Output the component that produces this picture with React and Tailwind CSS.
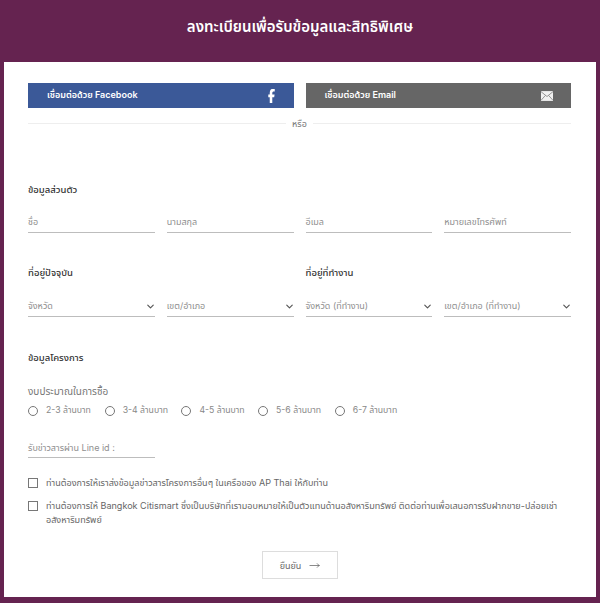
import { ChevronDown, MoveRight } from "lucide-react";

const FONT = "font-['Inter','Noto_Sans','Noto_Sans_Thai','DejaVu_Sans',sans-serif]";

function TextField({ label }) {
  return (
    <div className="h-[26px] border-b border-[#bdbdbd] flex items-center text-[9px] text-[#8f8f8f] pt-[8px] pb-[3px]">
      {label}
    </div>
  );
}

function SelectField({ label }) {
  return (
    <div className="h-[26px] border-b border-[#bdbdbd] flex items-center justify-between text-[9px] text-[#8f8f8f] pt-[8px] pb-[3px]">
      <span>{label}</span>
      <ChevronDown size={11} strokeWidth={2.5} className="text-[#555555] -mr-[1px]" />
    </div>
  );
}

function Radio({ label }) {
  return (
    <label className="w-[76.7px] flex items-center gap-[8px] text-[8.7px] text-[#888888]">
      <span className="w-[10px] h-[10px] rounded-full border border-[#777777]" />
      {label}
    </label>
  );
}

function Check({ children }) {
  return (
    <div className="flex items-start gap-[8px] text-[9.05px] leading-[14px] text-[#666666]">
      <span className="w-[10px] h-[10px] mt-[2px] shrink-0 border border-[#777777]" />
      <span>{children}</span>
    </div>
  );
}

export default function App() {
  return (
    <div className={`${FONT} bg-[#652350] h-[603px] px-[4px] pb-[6px] flex flex-col`}>
      {/* header */}
      <div className="h-[62px] flex items-center justify-center pb-[8px]">
        <h1 className="text-[15px] font-semibold text-white">ลงทะเบียนเพื่อรับข้อมูลและสิทธิพิเศษ</h1>
      </div>

      <div className="bg-white flex-1 px-[24px] pt-[21px]">
        {/* social buttons */}
        <div className="grid grid-cols-2 gap-[12px] pr-[1px]">
          <div className="h-[25px] bg-[#3b5998] flex items-center justify-between pl-[19px] pr-[19px] text-[9px] font-semibold text-white">
            <span className="-mt-[2px]">เชื่อมต่อด้วย Facebook</span>
            <svg width="7" height="14" viewBox="0 0 320 512" preserveAspectRatio="none" fill="currentColor">
              <path d="M80 299v213h116V299h87l18-100H196v-35c0-53 21-73 75-73 17 0 30 0 37 1V1C293-3 257-8 236-8 126-8 80 44 80 156v43H13v100h67z" />
            </svg>
          </div>
          <div className="h-[25px] bg-[#666666] flex items-center justify-between pl-[19px] pr-[18px] text-[9px] font-semibold text-white">
            <span className="-mt-[2px]">เชื่อมต่อด้วย Email</span>
            <svg width="12" height="10" viewBox="0 0 22 18" fill="none">
              <rect x="0" y="0" width="22" height="18" fill="#f0f0f0" />
              <path d="M0 1l11 9 11-9M0 17l8-9M22 17l-8-9" stroke="#666666" strokeWidth="1.2" />
            </svg>
          </div>
        </div>

        {/* divider */}
        <div className="flex items-center gap-[6px] mt-[9px] pr-[1px] text-[9px] text-[#777777]">
          <div className="flex-1 h-px bg-[#eeeeee]" />
          <span>หรือ</span>
          <div className="flex-1 h-px bg-[#eeeeee]" />
        </div>

        {/* personal */}
        <h2 className="mt-[52px] text-[9.5px] font-medium text-[#333333]">ข้อมูลส่วนตัว</h2>
        <div className="grid grid-cols-4 gap-[12px] mt-[10px] pr-[1px]">
          <TextField label="ชื่อ" />
          <TextField label="นามสกุล" />
          <TextField label="อีเมล" />
          <TextField label="หมายเลขโทรศัพท์" />
        </div>

        {/* addresses */}
        <div className="grid grid-cols-2 gap-[12px] mt-[33px] pr-[1px]">
          <div>
            <h2 className="text-[9.5px] font-medium text-[#333333]">ที่อยู่ปัจจุบัน</h2>
            <div className="grid grid-cols-2 gap-[12px] mt-[11px]">
              <SelectField label="จังหวัด" />
              <SelectField label="เขต/อำเภอ" />
            </div>
          </div>
          <div>
            <h2 className="text-[9.5px] font-medium text-[#333333]">ที่อยู่ที่ทำงาน</h2>
            <div className="grid grid-cols-2 gap-[12px] mt-[11px]">
              <SelectField label="จังหวัด (ที่ทำงาน)" />
              <SelectField label="เขต/อำเภอ (ที่ทำงาน)" />
            </div>
          </div>
        </div>

        {/* project */}
        <h2 className="mt-[34px] text-[9.5px] font-medium text-[#333333]">ข้อมูลโครงการ</h2>
        <p className="mt-[19px] text-[10px] text-[#777777]">งบประมาณในการซื้อ</p>
        <div className="flex mt-[5px]">
          <Radio label="2-3 ล้านบาท" />
          <Radio label="3-4 ล้านบาท" />
          <Radio label="4-5 ล้านบาท" />
          <Radio label="5-6 ล้านบาท" />
          <Radio label="6-7 ล้านบาท" />
        </div>
        <div className="w-[127px] mt-[15px]">
          <TextField label="รับข่าวสารผ่าน Line id :" />
        </div>

        {/* consent */}
        <div className="flex flex-col gap-[9px] mt-[18px] pr-[8px]">
          <Check>ท่านต้องการให้เราส่งข้อมูลข่าวสารโครงการอื่นๆ ในเครือของ AP Thai ให้กับท่าน</Check>
          <Check>
            ท่านต้องการให้ Bangkok Citismart ซึ่งเป็นบริษัทที่เรามอบหมายให้เป็นตัวแทนด้านอสังหาริมทรัพย์ ติดต่อท่านเพื่อเสนอการรับฝากขาย-ปล่อยเช่าอสังหาริมทรัพย์
          </Check>
        </div>

        {/* submit */}
        <div className="flex justify-center mt-[24px]">
          <button className="w-[76px] h-[28px] border border-[#dddddd] flex items-center justify-center gap-[8px] text-[9px] text-[#666666]">
            ยืนยัน
            <MoveRight size={11} strokeWidth={1.25} className="text-[#333333]" />
          </button>
        </div>
      </div>
    </div>
  );
}
